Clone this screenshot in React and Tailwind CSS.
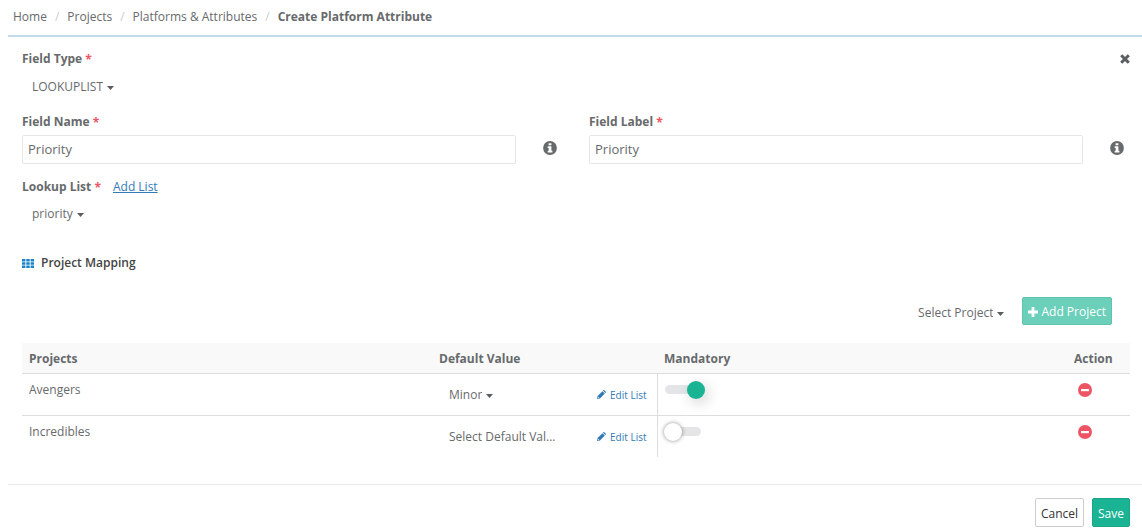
import React, { useState } from "react";

const PROJECT_OPTIONS = ["Select Project", "Avengers", "Incredibles"];

const initialMappings = [
  { name: "Avengers", value: "Minor", mandatory: true },
  { name: "Incredibles", value: "", mandatory: false },
];

const InfoIcon = () => (
  <svg viewBox="0 0 14 14" className="mb-[3px] size-3.5 shrink-0" aria-hidden="true">
    <circle cx="7" cy="7" r="6.9" fill="#676a6c" />
    <path
      d="M5.6 2.2h2.8v2H5.6zM4.7 5.2h3.7v4.5h1v1.7H4.7V9.7h1V6.9h-1z"
      fill="#fff"
    />
  </svg>
);

const CloseIcon = () => (
  <svg viewBox="0 0 10 10" className="size-2.5" aria-hidden="true">
    <path d="M1.200 1.200l7.600 7.600M8.800 1.200l-7.600 7.600" stroke="#5a5d5f" strokeWidth="3" />
  </svg>
);

const GridIcon = () => (
  <svg viewBox="0 0 12 9" className="h-[9px] w-3" aria-hidden="true">
    <path
      d="M0 0h3.4v2.4H0zM4.300 0h3.4v2.4H4.300zM8.600 0h3.4v2.4H8.600zM0 3.3h3.4v2.4H0zM4.300 3.3h3.4v2.4H4.300zM8.600 3.3h3.4v2.4H8.600zM0 6.6h3.4V9H0zM4.300 6.6h3.4V9H4.300zM8.600 6.6h3.4V9H8.600z"
      fill="#1c84c6"
    />
  </svg>
);

const PlusIcon = () => (
  <svg viewBox="0 0 10 10" className="size-2.5" aria-hidden="true">
    <path d="M5 0v10M0 5h10" stroke="#fff" strokeWidth="2.8" />
  </svg>
);

const PencilIcon = () => (
  <svg viewBox="0 0 10 10" className="size-[9px]" aria-hidden="true">
    <path
      d="M0 10l.6-3.3L6 1.3l2.7 2.7-5.4 5.4zM6.6.7l.5-.5q.5-.4 1 0l1.700 1.700q.4.5 0 1l-.5.5z"
      fill="#337ab7"
    />
    <path d="M1.1 7.4l1.500 1.500-1 .3-.8-.8z" fill="#fff" />
  </svg>
);

const RemoveIcon = () => (
  <svg viewBox="0 0 14 14" className="size-3.5" aria-hidden="true">
    <circle cx="7" cy="7" r="7" fill="#ed5565" />
    <path d="M3 6h8v2.200H3z" fill="#fff" />
  </svg>
);

const Required = () => (
  <span className="align-middle text-xs leading-none text-[#ed5565]">*</span>
);

const Dropdown = ({ id, label, options, value, onChange, caret = true }) => (
  <span className="inline-flex h-5 items-center gap-1">
    <select
      id={id}
      aria-label={label}
      value={value}
      onChange={(e) => onChange(e.target.value)}
      className="field-sizing-content cursor-pointer appearance-none bg-transparent text-xs"
    >
      {options.map((option) => (
        <option key={option}>{option}</option>
      ))}
    </select>
    {caret && (
      <svg
        viewBox="0 0 7 4"
        className="pointer-events-none mt-0.5 h-1 w-[7px]"
        aria-hidden="true"
      >
        <path d="M0 0h7L3.5 4z" fill="#5a5d5f" />
      </svg>
    )}
  </span>
);

const TextField = ({ id, label, value, onChange }) => (
  <div>
    <label htmlFor={id} className="block text-xs leading-5 font-bold">
      {label} <Required />
    </label>
    <div className="mt-[3px] flex items-center gap-[27px]">
      <input
        id={id}
        type="text"
        value={value}
        onChange={(e) => onChange(e.target.value)}
        className="h-[29px] min-w-0 flex-1 rounded-xs border border-[#e5e6e7] px-[5px] pb-0.5 text-[13px]"
      />
      <InfoIcon />
    </div>
  </div>
);

const Toggle = ({ label, checked, onChange }) => (
  <label className="relative flex h-5 w-10 cursor-pointer items-center">
    <input
      type="checkbox"
      aria-label={label}
      checked={checked}
      onChange={(e) => onChange(e.target.checked)}
      className="peer sr-only"
    />
    <span className="h-[9px] w-9 rounded-full bg-[#e4e5e7]" />
    <span className="absolute -left-px size-[18px] rounded-full bg-white shadow-[0_0_4px_rgba(0,0,0,0.45)] peer-checked:left-[22px] peer-checked:bg-[#1ab394] peer-checked:shadow-[3px_4px_14px_rgba(0,0,0,0.18)]" />
  </label>
);

const CreatePlatformAttribute = () => {
  const [fieldType, setFieldType] = useState("LOOKUPLIST");
  const [fieldName, setFieldName] = useState("Priority");
  const [fieldLabel, setFieldLabel] = useState("Priority");
  const [lookupList, setLookupList] = useState("priority");
  const [project, setProject] = useState("Select Project");
  const [mappings, setMappings] = useState(initialMappings);

  const updateMapping = (name, changes) => {
    setMappings(
      mappings.map((item) =>
        item.name === name ? { ...item, ...changes } : item
      )
    );
  };

  const removeMapping = (name) => {
    setMappings(mappings.filter((item) => item.name !== name));
  };

  return (
    <div className="bg-white pl-2 font-['Open_Sans',sans-serif] text-xs text-[#676a6c]">
      <nav className="border-b-2 border-[#c3dbe8] pt-[7px] pb-2 pl-[5px]">
        <ol className="flex items-center leading-5">
          <li>
            <a href="#home">Home</a>
          </li>
          <li className="px-2 text-[#ccc]">/</li>
          <li>
            <a href="#projects">Projects</a>
          </li>
          <li className="px-2 text-[#ccc]">/</li>
          <li>
            <a href="#platforms">Platforms &amp; Attributes</a>
          </li>
          <li className="px-2 text-[#ccc]">/</li>
          <li className="font-bold">Create Platform Attribute</li>
        </ol>
      </nav>

      <form onSubmit={(e) => e.preventDefault()}>
        <div className="pt-3 pl-3.5">
          <div className="flex items-start justify-between pr-3">
            <label htmlFor="fieldType" className="leading-5 font-bold">
              Field Type <Required />
            </label>
            <button
              type="button"
              aria-label="Close"
              className="flex h-5 cursor-pointer items-center"
            >
              <CloseIcon />
            </button>
          </div>
          <div className="mt-2 flex pl-2.5">
            <Dropdown
              id="fieldType"
              options={["LOOKUPLIST", "TEXT", "NUMBER", "DATE"]}
              value={fieldType}
              onChange={setFieldType}
            />
          </div>

          <div className="mt-[15px] grid grid-cols-2 gap-8 pr-[18px]">
            <TextField
              id="fieldName"
              label="Field Name"
              value={fieldName}
              onChange={setFieldName}
            />
            <TextField
              id="fieldLabel"
              label="Field Label"
              value={fieldLabel}
              onChange={setFieldLabel}
            />
          </div>

          <div className="mt-[13px] flex gap-3 leading-5">
            <label htmlFor="lookupList" className="font-bold">
              Lookup List <Required />
            </label>
            <a href="#add-list" className="text-[#337ab7] underline">
              Add List
            </a>
          </div>
          <div className="mt-[7px] flex pl-2.5">
            <Dropdown
              id="lookupList"
              options={["priority", "severity", "status"]}
              value={lookupList}
              onChange={setLookupList}
            />
          </div>

          <h2 className="mt-[29px] flex items-center gap-[7px] leading-5 font-semibold text-[#444]">
            <GridIcon />
            Project Mapping
          </h2>

          <div className="mt-6 flex items-center justify-end gap-[18px] pr-[30px]">
            <div className="mt-1 flex">
              <Dropdown
                label="Select Project"
                options={PROJECT_OPTIONS}
                value={project}
                onChange={setProject}
              />
            </div>
            <button
              type="button"
              disabled={project === "Select Project"}
              className="flex h-7 items-center gap-[3px] rounded-xs border border-[#1ab394] bg-[#1ab394] px-[5px] pt-0.5 text-white disabled:border-[#5fc4af] disabled:bg-[#6bcfba]"
            >
              <PlusIcon />
              Add Project
            </button>
          </div>

          <div className="mt-[18px] pr-3">
            <table className="w-full table-fixed border-collapse text-left leading-5">
              <thead>
                <tr className="h-[30px] border-b border-[#ddd] bg-[#f9f9f9]">
                  <th className="px-[7px] pt-0.5">Projects</th>
                  <th className="w-[225px] px-[7px] pt-0.5">Default Value</th>
                  <th className="px-[7px] pt-0.5">Mandatory</th>
                  <th className="w-[63px] px-[7px] pt-0.5">Action</th>
                </tr>
              </thead>
              <tbody>
                {mappings.map((item) => (
                  <tr
                    key={item.name}
                    className="h-[42px] border-b border-[#ddd] align-top last:border-b-0"
                  >
                    <td className="px-[7px] pt-1.5">{item.name}</td>
                    <td className="px-[7px] pt-[11px]">
                      <div className="flex items-center justify-between pr-[3px] pl-2.5">
                        <Dropdown
                          label={`Default value for ${item.name}`}
                          options={[
                            "Select Default Val...",
                            "Minor",
                            "Major",
                            "Critical",
                          ]}
                          value={item.value || "Select Default Val..."}
                          onChange={(value) =>
                            updateMapping(item.name, { value })
                          }
                          caret={item.value !== ""}
                        />
                        <a
                          href="#edit-list"
                          className="flex items-center gap-1 text-[10px] text-[#337ab7]"
                        >
                          <PencilIcon />
                          Edit List
                        </a>
                      </div>
                    </td>
                    <td className="border-l border-[#ddd] px-[7px] pt-1.5">
                      <Toggle
                        label={`${item.name} mandatory`}
                        checked={item.mandatory}
                        onChange={(mandatory) =>
                          updateMapping(item.name, { mandatory })
                        }
                      />
                    </td>
                    <td className="px-[11px] pt-1.5">
                      <button
                        type="button"
                        aria-label={`Remove ${item.name}`}
                        onClick={() => removeMapping(item.name)}
                        className="flex h-5 cursor-pointer items-center"
                      >
                        <RemoveIcon />
                      </button>
                    </td>
                  </tr>
                ))}
              </tbody>
            </table>
          </div>
        </div>

        <div className="mt-[27px] flex justify-end gap-2 border-t border-[#e7eaec] pt-[13px] pr-3">
          <button
            type="button"
            className="h-[29px] cursor-pointer rounded-xs border border-[#ccc] bg-white px-[5px] pt-0.5 text-[#333]"
          >
            Cancel
          </button>
          <button
            type="submit"
            className="h-[29px] cursor-pointer rounded-xs border border-[#18a689] bg-[#1ab394] px-[5px] pt-0.5 text-white"
          >
            Save
          </button>
        </div>
      </form>
    </div>
  );
};

export default CreatePlatformAttribute;
